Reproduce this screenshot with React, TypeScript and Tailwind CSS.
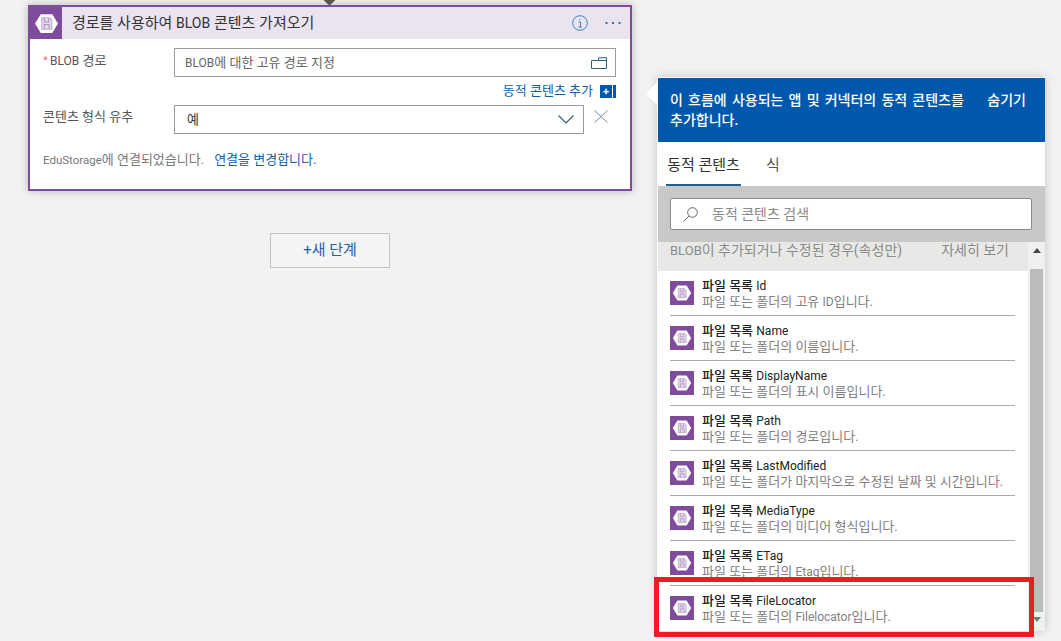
const font = { fontFamily: 'Roboto, "Noto Sans CJK KR", sans-serif' };

function ConnectorIcon({ size, box }: { size: number; box: number }) {
  return (
    <div className="flex shrink-0 items-center justify-center bg-[#7f4b9b]" style={{ width: box, height: box }}>
      <svg width={size} height={size} viewBox="0 0 24 24">
        <polygon points="6.5,3 17.5,3 23,12 17.5,21 6.5,21 1,12" fill="#ffffff" strokeLinejoin="round" />
        <path d="M7.500 6.500h7.500l2 2v9h-9.500z" fill="#e3d8ea" stroke="#c0a8cd" strokeWidth="1" />
        <path d="M10 7v3.500h4V7M10 17v-4h4.500v4" fill="none" stroke="#b095c0" strokeWidth="1" />
      </svg>
    </div>
  );
}

// Latin runs sit about one pixel smaller than the Korean text around them.
function Mixed({ text, latin }: { text: string; latin: string }) {
  return (
    <>
      {text.split(/([A-Za-z]+)/).map((part, i) =>
        i % 2 === 1 ? (
          <span key={i} className={latin}>
            {part}
          </span>
        ) : (
          <span key={i}>{part}</span>
        ),
      )}
    </>
  );
}

const rows = [
  ["Id", "파일 또는 폴더의 고유 ID입니다."],
  ["Name", "파일 또는 폴더의 이름입니다."],
  ["DisplayName", "파일 또는 폴더의 표시 이름입니다."],
  ["Path", "파일 또는 폴더의 경로입니다."],
  ["LastModified", "파일 또는 폴더가 마지막으로 수정된 날짜 및 시간입니다."],
  ["MediaType", "파일 또는 폴더의 미디어 형식입니다."],
  ["ETag", "파일 또는 폴더의 Etag입니다."],
  ["FileLocator", "파일 또는 폴더의 Filelocator입니다."],
];

function Card() {
  return (
    <div className="h-[186px] w-[604px] border-2 border-[#7f4b9b] bg-white shadow-[0_0_8px_rgba(0,0,0,0.25)]">
      <div className="flex h-[32px] items-center bg-[#eae3f0]">
        <ConnectorIcon size={25} box={32} />
        <span className="ml-[10px] text-[15px] text-[#333333]">
          <Mixed text="경로를 사용하여 BLOB 콘텐츠 가져오기" latin="text-[14px]" />
        </span>
        <div className="ml-auto mr-[9px] flex items-center gap-[17px]">
          <svg width="16" height="16" viewBox="0 0 16 16" fill="none" stroke="#3f7fc1" strokeWidth="1">
            <circle cx="8" cy="8" r="7.300" />
            <path d="M6.500 7h2v5M6.500 12h3.500M7.500 4.500h1" />
          </svg>
          <svg width="16" height="4" viewBox="0 0 16 4" fill="#3b6ea8">
            <rect x="0.500" y="1" width="2" height="2" />
            <rect x="7" y="1" width="2" height="2" />
            <rect x="13.500" y="1" width="2" height="2" />
          </svg>
        </div>
      </div>
      <div className="flex pl-[13px] pt-[9px]">
        <label className="flex w-[131px] pt-[3px] text-[13px] leading-[20px] text-[#555555]">
          <span className="w-[7px] text-[11px] text-[#e8707b]">*</span>
          <span>
            <Mixed text="BLOB 경로" latin="text-[12px]" />
          </span>
        </label>
        <div className="flex h-[29px] w-[442px] items-center border border-[#9b9b9b] pl-[10px] pr-[8px]">
          <span className="text-[13px] text-[#666666]">
            <Mixed text="BLOB에 대한 고유 경로 지정" latin="text-[12px]" />
          </span>
          <svg className="ml-auto" width="16" height="12" viewBox="0 0 16 12" fill="none" stroke="#2f607f" strokeWidth="1">
            <path d="M0.500 11.500V3.500h7V1l8-0.500v11zM7.500 3.500h8" />
          </svg>
        </div>
      </div>
      <div className="flex h-[28px] items-center justify-end pr-[14px]">
        <span className="mr-[7px] text-[13px] text-[#0f5ea8]">동적 콘텐츠 추가</span>
        <span className="flex h-[13px] w-[12px] items-center justify-center bg-[#0058ad] text-[11px] font-bold leading-none text-white">+</span>
        <span className="ml-[1px] h-[13px] w-[3px] bg-[#0058ad]" />
      </div>
      <div className="flex pl-[13px]">
        <label className="w-[131px] pt-[2px] text-[13px] leading-[20px] text-[#555555]">콘텐츠 형식 유추</label>
        <div className="flex h-[29px] w-[410px] items-center border border-[#9b9b9b] pl-[12px] pr-[9px]">
          <span className="text-[13px] text-[#333333]">예</span>
          <svg className="ml-auto" width="16" height="9" viewBox="0 0 16 9" fill="none" stroke="#2f607f" strokeWidth="1.200">
            <path d="M0.500 0.500L8 8l7.500-7.500" />
          </svg>
        </div>
        <svg className="ml-[10px] mt-[5px]" width="14" height="13" viewBox="0 0 14 13" fill="none" stroke="#6d8fa5" strokeWidth="1">
          <path d="M0.500 0.500l13 12M13.500 0.500l-13 12" />
        </svg>
      </div>
      <div className="flex items-center pl-[13px] pt-[16px] text-[13px] leading-[20px]">
        <span className="text-[#777777]">
          <Mixed text="EduStorage에 연결되었습니다." latin="text-[11.5px]" />
        </span>
        <span className="ml-[10px] text-[#0f5ea8]">연결을 변경합니다.</span>
      </div>
    </div>
  );
}

function Panel() {
  return (
    <div className="ml-[25px] mt-[77px] flex h-[554px] w-[388px] flex-col border-l border-t border-white bg-white shadow-[0_0_9px_rgba(0,0,0,0.2)]">
      <div className="flex h-[64px] shrink-0 items-start bg-[#0058ad] pl-[12px] pr-[19px] pt-[12px] text-[14px] font-medium leading-[20px] text-white">
        <span className="w-[310px] break-keep [word-spacing:1.7px]">이 흐름에 사용되는 앱 및 커넥터의 동적 콘텐츠를 추가합니다.</span>
        <span className="ml-auto">숨기기</span>
      </div>
      <div className="flex h-[44px] shrink-0 items-end pl-[8px]">
        <span className="h-[44px] w-[75px] whitespace-nowrap border-b-2 border-[#1f5f8b] pt-[12px] text-center text-[15px] text-[#333333]">동적 콘텐츠</span>
        <span className="ml-[25px] h-[44px] pt-[12px] text-[15px] text-[#555555]">식</span>
      </div>
      <div className="flex h-[56px] shrink-0 items-center bg-[#c8c9c6] pl-[12px] pr-[13px]">
        <div className="flex h-[32px] w-full items-center rounded-[2px] border border-[#8a8a8a] bg-white pl-[12px]">
          <svg width="15" height="15" viewBox="0 0 15 15" fill="none" stroke="#666666" strokeWidth="1">
            <circle cx="9.500" cy="5.500" r="4.800" />
            <path d="M6 9L0.800 14.200" />
          </svg>
          <span className="ml-[14px] text-[14px] text-[#8a8a8a]">동적 콘텐츠 검색</span>
        </div>
      </div>
      <div className="flex min-h-0 flex-1">
        <div className="w-[370px] overflow-hidden">
          <div className="flex h-[29px] items-start bg-[#e8e9e7] pl-[12px] pr-[19px] text-[14px] leading-[17px] text-[#8a8a8a]">
            <span>
              <Mixed text="BLOB이 추가되거나 수정된 경우(속성만)" latin="text-[13px]" />
            </span>
            <span className="ml-auto">자세히 보기</span>
          </div>
          {rows.map(([name, desc]) => (
            <div key={name} className="ml-[12px] flex h-[45px] w-[345px] gap-[8px] border-b border-[#aaaaaa] pt-[10px] last:border-b-0">
              <ConnectorIcon size={20} box={24} />
              <div className="-mt-[3px] whitespace-nowrap text-[13px] leading-[16px]">
                <div className="text-[#222222]">
                  <span className="font-medium">파일 목록</span> <span className="text-[12px]">{name}</span>
                </div>
                <div className="text-[#808080]">
                  <Mixed text={desc} latin="text-[12px]" />
                </div>
              </div>
            </div>
          ))}
        </div>
        <div className="flex w-[17px] flex-col items-center bg-[#f0f0f0]">
          <svg className="mb-[16px] mt-[6px]" width="8" height="5" viewBox="0 0 8 5" fill="#444444">
            <path d="M4 0l4 5H0z" />
          </svg>
          <div className="h-[343px] w-[13px] bg-[#bcbcbc]" />
          <svg className="mt-[5px]" width="8" height="5" viewBox="0 0 8 5" fill="#777777">
            <path d="M0 0h8L4 5z" />
          </svg>
        </div>
      </div>
    </div>
  );
}

export default function App() {
  return (
    <div style={font} className="relative flex h-[641px] w-[1061px] overflow-hidden bg-[#f2f2f2]">
      <div className="ml-[28px] mt-[5px] flex w-[604px] flex-col items-center">
        <Card />
        <div className="mt-[42px] flex h-[35px] w-[120px] items-center justify-center border border-[#c4c4c4] bg-[#f4f4f4] text-[15px] text-[#2a5f9e]">
          +새 단계
        </div>
      </div>
      <Panel />
      <div className="absolute left-[325px] top-[-5px] h-[9px] w-[9px] rotate-45 bg-[#555555]" />
      <svg className="absolute left-[646px] top-[81px]" width="12" height="25" viewBox="0 0 12 25" fill="#ffffff">
        <path d="M12 0v25L0 12.500z" />
      </svg>
      <div className="pointer-events-none absolute left-[654px] top-[577px] h-[60px] w-[380px] border-[5px] border-[#ed1c24]" />
    </div>
  );
}
